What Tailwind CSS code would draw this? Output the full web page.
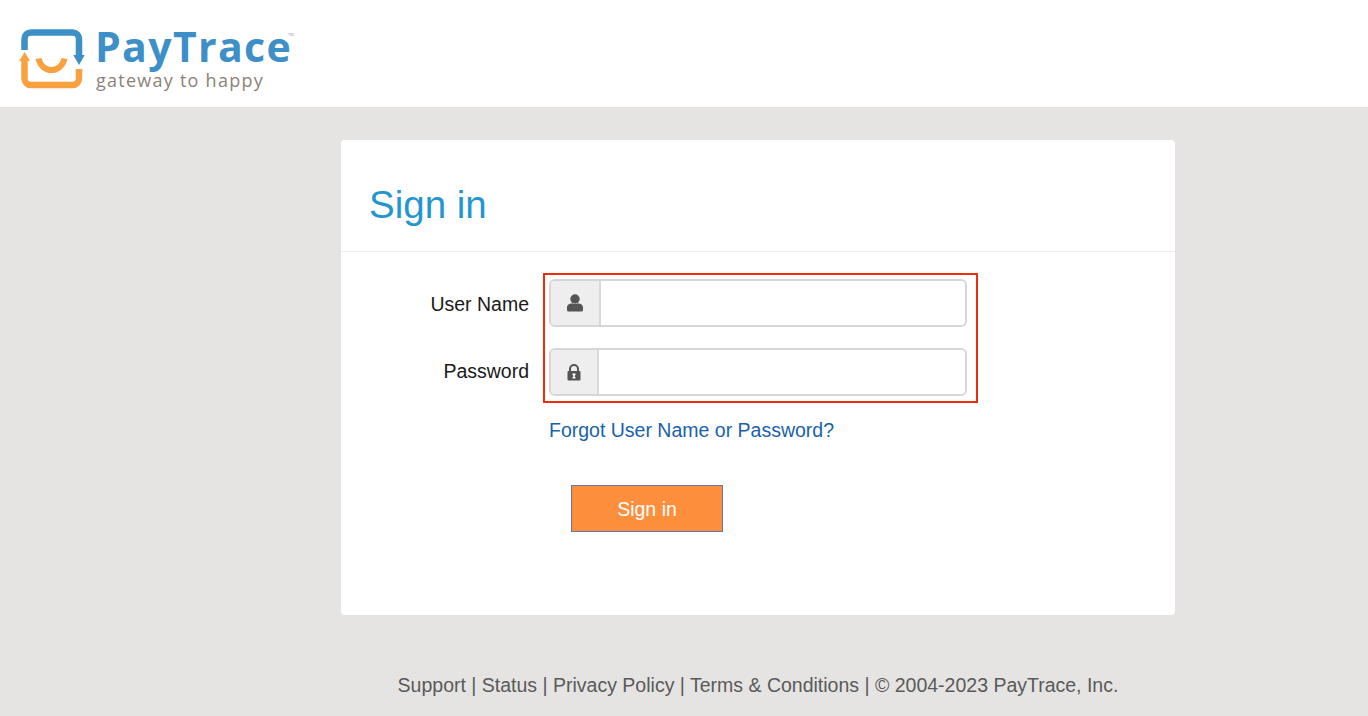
<!DOCTYPE html>
<html lang="en">
<head>
    <meta charset="UTF-8">
    <meta name="viewport" content="width=device-width, initial-scale=1.0">
    <title>PayTrace - Sign in</title>
    <script src="https://cdn.jsdelivr.net/npm/@tailwindcss/browser@4"></script>
</head>
<body class="bg-[#e5e4e2] font-['Liberation_Sans',Arial,sans-serif] h-[716px] overflow-hidden">
    <!-- Header with logo -->
    <header class="bg-white h-[107px] flex items-start">
        <svg class="w-[72px] h-[70px] ml-[17px] mt-[24px] shrink-0" viewBox="17 24 72 70" fill="none">
            <path d="M24.5 50V39a6.500 6.500 0 0 1 6.500-6.500H72.500a6.500 6.500 0 0 1 6.500 6.500V56" stroke="#3d8fc7" stroke-width="6.500"/>
            <path d="M73.300 55H84.700L79 65Z" fill="#3d8fc7"/>
            <path d="M24.500 60V78.500a6.500 6.500 0 0 0 6.500 6.500H72.500a6.500 6.500 0 0 0 6.500-6.500V69" stroke="#f9a03f" stroke-width="6.500"/>
            <path d="M19.300 61H30L24.600 52Z" fill="#f9a03f"/>
            <path d="M38.500 58.500C40 66 46 70 51.500 70S63 66 64.500 58.500" stroke="#f9a03f" stroke-width="6"/>
        </svg>
        <div class="ml-[6px] mt-[26px] font-['Open_Sans',sans-serif] relative">
            <div class="text-[41px] leading-[41px] font-bold tracking-[1.350px] text-[#3d8fc7]">PayTrace</div>
            <span class="absolute left-[193px] top-[7px] text-[4px] leading-none text-[#9a9a9a]">TM</span>
            <div class="mt-[3px] ml-[1px] text-[18px] leading-[20px] tracking-[1.250px] text-[#8c8279] font-medium">gateway to happy</div>
        </div>
    </header>

    <div class="w-[834px] ml-[341px]">
        <!-- Sign in card -->
        <main class="bg-white rounded-[4px] mt-[33px] h-[475px]">
            <div class="h-[112px] pl-[28px] pt-[40px] border-b border-[#eeeeee]">
                <h1 class="text-[38.500px] leading-[50px] text-[#2396d0]">Sign in</h1>
            </div>
            <div class="flex mt-[21px]">
                <div class="w-[188px] flex flex-col text-right text-[19.500px] text-[#1a1a1a]">
                    <label class="h-[48px] mt-[7px] leading-[48px]">User Name</label>
                    <label class="h-[48px] mt-[19px] leading-[48px]">Password</label>
                </div>
                <div class="ml-[14px]">
                    <div class="w-[435px] h-[130px] border-2 border-[#f02d0a] pl-[4px] pr-[9px] py-[4px] flex flex-col gap-[21px]">
                        <div class="h-[48px] flex border-2 border-[#d6d6d6] rounded-[6px] overflow-hidden">
                            <div class="w-[50px] bg-[#eeeeee] border-r-2 border-[#d8d8d8] flex items-center justify-center">
                                <svg class="w-[16px] h-[18px]" viewBox="0 0 16 18"><circle cx="8" cy="5" r="4.700" fill="#555"/><path d="M0 13.500C0 10.500 2.500 9.500 5 9.200 6 10.200 10 10.200 11 9.200 13.500 9.500 16 10.500 16 13.500V16A1.500 1.500 0 0 1 14.500 17.500H1.500A1.500 1.500 0 0 1 0 16Z" fill="#555"/></svg>
                            </div>
                            <input type="text" class="flex-1 min-w-0 bg-white outline-none">
                        </div>
                        <div class="h-[48px] flex border-2 border-[#d6d6d6] rounded-[6px] overflow-hidden">
                            <div class="w-[48px] bg-[#eeeeee] border-r-2 border-[#d8d8d8] flex items-center justify-center">
                                <svg class="w-[14px] h-[17px]" viewBox="0 0 14 17"><path d="M3 7.500V5a4 4 0 0 1 8 0V7.500" fill="none" stroke="#555" stroke-width="2"/><rect x="0.500" y="7" width="13" height="9.500" rx="1" fill="#555"/><path d="M5.500 9.500h3v1.500l-.7.400V13h.7v1.500h-3V13h.7V11.400l-.7-.400Z" fill="#fff"/></svg>
                            </div>
                            <input type="password" class="flex-1 min-w-0 bg-white outline-none">
                        </div>
                    </div>
                    <a href="#" class="block ml-[6px] mt-[16px] text-[19.500px] leading-[23px] text-[#1a62a8]">Forgot User Name or Password?</a>
                    <button class="block ml-[28px] mt-[43px] w-[152px] h-[47px] pt-[2px] bg-[#fd8f3c] border border-[#5f78a8] text-white text-[19.500px]">Sign in</button>
                </div>
            </div>
        </main>

        <!-- Footer -->
        <footer class="mt-[59px] text-center text-[19.500px] leading-[22px] text-[#5a5a5a]">
            <a href="#">Support</a> | <a href="#">Status</a> | <a href="#">Privacy Policy</a> | <a href="#">Terms &amp; Conditions</a> | © 2004-2023 PayTrace, Inc.
        </footer>
    </div>
</body>
</html>
